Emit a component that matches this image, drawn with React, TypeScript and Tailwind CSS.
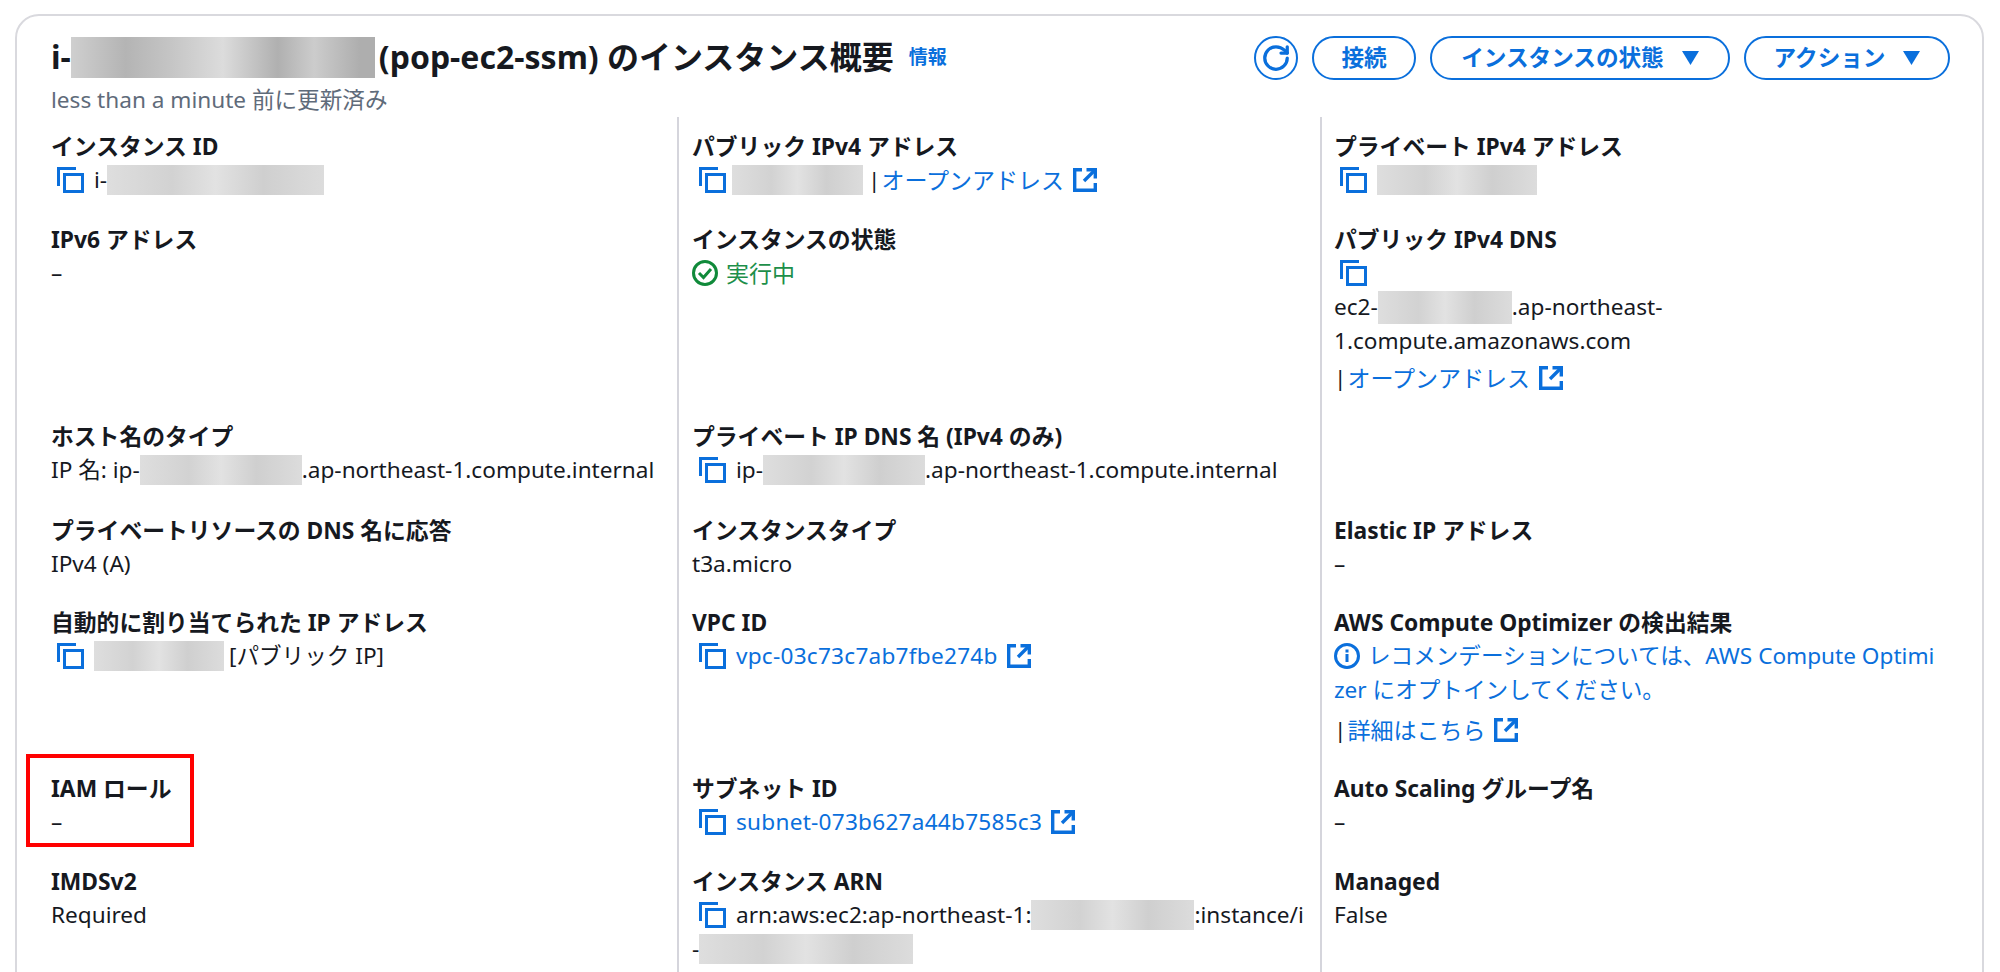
import { RotateCw } from "lucide-react";
import type { ReactNode } from "react";

function CopyIcon() {
  return (
    <svg viewBox="0 0 27 26" className="mr-[10px] h-[26px] w-[27px] shrink-0 text-[#0a6fdc]" fill="none" stroke="currentColor" strokeWidth="3">
      <path d="M1.5 19V1.5H19" />
      <rect x="7.5" y="7.5" width="18" height="17" />
    </svg>
  );
}

function ExternalIcon() {
  return (
    <svg viewBox="0 0 24 24" className="ml-[9px] h-[24px] w-[24px] shrink-0 text-[#0a6fdc]" fill="none" stroke="currentColor" strokeWidth="3.4">
      <path d="M9 1.7H1.7v20.6h20.6V15" />
      <path d="M13.5 1.7h8.8v8.8" />
      <path d="M22 2 11 13" />
    </svg>
  );
}

function Caret() {
  return (
    <svg viewBox="0 0 17 14" className="h-[14px] w-[17px] fill-current">
      <path d="M0 0h17L8.5 14z" />
    </svg>
  );
}

function Blur({ w, h = 30, dark = false }: { w: number; h?: number; dark?: boolean }) {
  return (
    <span
      className={
        dark
          ? "inline-block shrink-0 bg-[linear-gradient(90deg,#cfcfcf,#b4b4b4_18%,#c4c4c4_32%,#dcdcdc_50%,#b0b0b0_68%,#cccccc_80%,#aeaeae_95%)]"
          : "inline-block shrink-0 bg-[linear-gradient(90deg,#dedede,#d2d2d2_30%,#e2e2e2_50%,#cfcfcf_72%,#dcdcdc)]"
      }
      style={{ width: w, height: h }}
    />
  );
}

function Cell({ label, col, children }: { label: string; col: 1 | 2 | 3; children?: ReactNode }) {
  const pad =
    col === 1
      ? "relative pl-[34px]"
      : col === 2
        ? "relative border-l-2 border-[#d5d5dc] pl-[13px]"
        : "relative border-l-2 border-[#d5d5dc] pl-[12px]";
  return (
    <div className={pad}>
      <div className="text-[22.8px] font-bold">{label}</div>
      <div className="-mt-[1px]">{children}</div>
    </div>
  );
}

function Line({ children }: { children: ReactNode }) {
  return <div className="flex h-[34px] items-center whitespace-nowrap">{children}</div>;
}

function OpenLink({ text }: { text: string }) {
  return (
    <>
      <span className="mr-[1px]">|</span>
      <span className="text-[23px] text-[#0a6fdc]">{text}</span>
      <ExternalIcon />
    </>
  );
}

export default function App() {
  return (
    <div className="h-[972px] overflow-hidden bg-white pl-[15px] pr-[16px] pt-[14px] font-['Noto_Sans','Noto_Sans_CJK_JP',sans-serif] text-[22.6px] leading-[34px] text-[#16191f]">
      <div className="h-[1000px] rounded-[24px] border-2 border-[#d9d9de]">
        <div className="flex h-[101px] items-start justify-between pl-[34px] pr-[32px] pt-[20px]">
          <div>
            <div className="flex h-[42px] items-center">
              <h1 className="flex items-center text-[32px] font-bold whitespace-nowrap">
                i-
                <Blur w={304} h={41} dark />
                <span className="ml-[4px]">(pop-ec2-ssm) のインスタンス概要</span>
              </h1>
              <span className="ml-[15px] text-[19px] font-bold text-[#0a6fdc]">情報</span>
            </div>
            <div className="mt-[5px] text-[#5f6b7a]">less than a minute 前に更新済み</div>
          </div>
          <div className="flex items-center gap-[14px] font-bold text-[#0a6fdc]">
            <button className="flex h-[44px] w-[44px] items-center justify-center rounded-full border-2 border-[#0a6fdc]">
              <RotateCw size={30} strokeWidth={2.6} />
            </button>
            <button className="h-[44px] w-[104px] rounded-full border-2 border-[#0a6fdc]">接続</button>
            <button className="flex h-[44px] w-[300px] items-center justify-center gap-[18px] rounded-full border-2 border-[#0a6fdc]">インスタンスの状態 <Caret /></button>
            <button className="flex h-[44px] w-[206px] items-center justify-center gap-[18px] rounded-full border-2 border-[#0a6fdc]">アクション <Caret /></button>
          </div>
        </div>

        <div className="grid grid-cols-[660px_643px_1fr] grid-rows-[13px_93px_197px_94px_92px_166px_93px_200px]">
          <div className="col-span-3 grid grid-cols-[660px_643px_1fr]">
            <div />
            <div className="border-l-2 border-[#d5d5dc]" />
            <div className="border-l-2 border-[#d5d5dc]" />
          </div>

          <Cell col={1} label="インスタンス ID">
            <Line><span className="ml-[6px]" /><CopyIcon />i-<Blur w={217} /></Line>
          </Cell>
          <Cell col={2} label="パブリック IPv4 アドレス">
            <Line><span className="ml-[7px]" /><CopyIcon /><span className="-ml-[4px]" /><Blur w={131} /><span className="ml-[5px]" /><OpenLink text="オープンアドレス" /></Line>
          </Cell>
          <Cell col={3} label="プライベート IPv4 アドレス">
            <Line><span className="ml-[6px]" /><CopyIcon /><Blur w={160} /></Line>
          </Cell>

          <Cell col={1} label="IPv6 アドレス">
            <Line>–</Line>
          </Cell>
          <Cell col={2} label="インスタンスの状態">
            <Line>
              <svg viewBox="0 0 26 26" className="mr-[8px] h-[26px] w-[26px] text-[#108a3a]" fill="none" stroke="currentColor" strokeWidth="3">
                <circle cx="13" cy="13" r="11.5" />
                <path d="m7 13 4.5 4.5L19 9" />
              </svg>
              <span className="text-[23px] text-[#1d8f4a]">実行中</span>
            </Line>
          </Cell>
          <Cell col={3} label="パブリック IPv4 DNS">
            <Line><span className="ml-[6px]" /><CopyIcon /></Line>
            <Line>ec2-<Blur w={134} h={33} />.ap-northeast-</Line>
            <Line>1.compute.amazonaws.com</Line>
            <div className="mt-[3px]"><Line><OpenLink text="オープンアドレス" /></Line></div>
          </Cell>

          <Cell col={1} label="ホスト名のタイプ">
            <Line>IP 名: ip-<Blur w={162} />.ap-northeast-1.compute.internal</Line>
          </Cell>
          <Cell col={2} label="プライベート IP DNS 名 (IPv4 のみ)">
            <Line><span className="ml-[7px]" /><CopyIcon />ip-<Blur w={162} />.ap-northeast-1.compute.internal</Line>
          </Cell>
          <Cell col={3} label="" />

          <Cell col={1} label="プライベートリソースの DNS 名に応答">
            <Line>IPv4 (A)</Line>
          </Cell>
          <Cell col={2} label="インスタンスタイプ">
            <Line>t3a.micro</Line>
          </Cell>
          <Cell col={3} label="Elastic IP アドレス">
            <Line>–</Line>
          </Cell>

          <Cell col={1} label="自動的に割り当てられた IP アドレス">
            <Line><span className="ml-[6px]" /><CopyIcon /><Blur w={130} /><span className="ml-[5px]">[パブリック IP]</span></Line>
          </Cell>
          <Cell col={2} label="VPC ID">
            <Line><span className="ml-[7px]" /><CopyIcon /><span className="tracking-[0.25px] text-[#0a6fdc]">vpc-03c73c7ab7fbe274b</span><ExternalIcon /></Line>
          </Cell>
          <Cell col={3} label="AWS Compute Optimizer の検出結果">
            <Line>
              <svg viewBox="0 0 26 26" className="mr-[8px] h-[26px] w-[26px] text-[#0a6fdc]" fill="none" stroke="currentColor" strokeWidth="3">
                <circle cx="13" cy="13" r="11.5" />
                <path d="M13 11v8M13 6.5v3" />
              </svg>
              <span className="text-[#0a6fdc]">レコメンデーションについては、AWS Compute Optimi</span>
            </Line>
            <Line><span className="text-[#0a6fdc]">zer にオプトインしてください。</span></Line>
            <div className="mt-[6px]"><Line><OpenLink text="詳細はこちら" /></Line></div>
          </Cell>

          <Cell col={1} label="IAM ロール">
            <Line>–</Line>
            <div className="absolute left-[9px] top-[-18px] h-[93px] w-[168px] border-4 border-[#ff0000]" />
          </Cell>
          <Cell col={2} label="サブネット ID">
            <Line><span className="ml-[7px]" /><CopyIcon /><span className="tracking-[0.25px] text-[#0a6fdc]">subnet-073b627a44b7585c3</span><ExternalIcon /></Line>
          </Cell>
          <Cell col={3} label="Auto Scaling グループ名">
            <Line>–</Line>
          </Cell>

          <Cell col={1} label="IMDSv2">
            <Line>Required</Line>
          </Cell>
          <Cell col={2} label="インスタンス ARN">
            <Line><span className="ml-[7px]" /><CopyIcon />arn:aws:ec2:ap-northeast-1:<Blur w={163} />:instance/i</Line>
            <Line>-<Blur w={214} /></Line>
          </Cell>
          <Cell col={3} label="Managed">
            <Line>False</Line>
          </Cell>
        </div>
      </div>
    </div>
  );
}
